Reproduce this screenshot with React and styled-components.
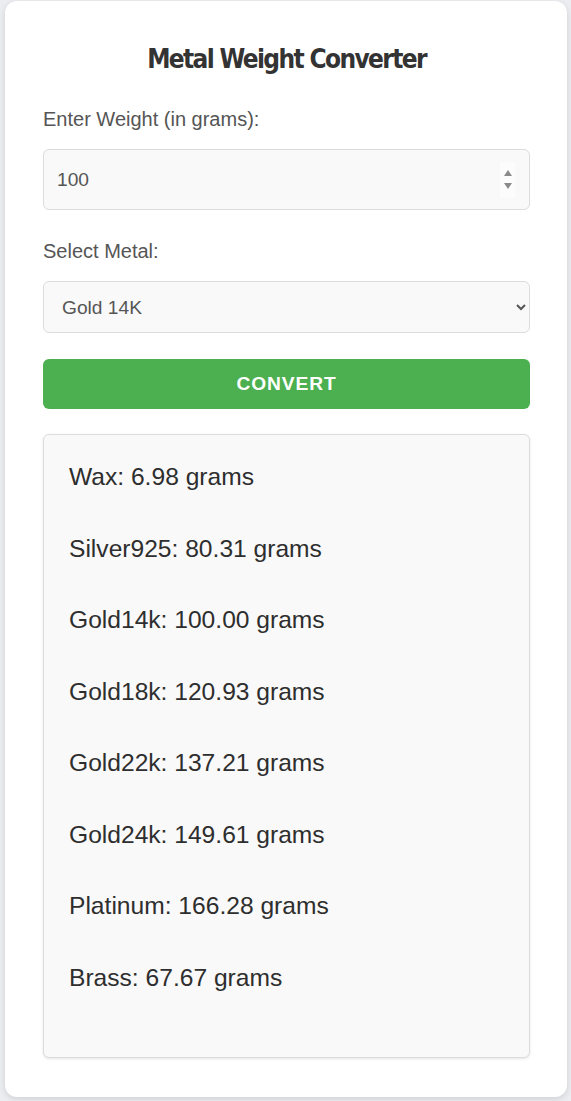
import styled, { createGlobalStyle } from "styled-components";

const GlobalStyle = createGlobalStyle`
  html, body {
    margin: 0;
    padding: 0;
    background: #ecedf1;
  }
  body {
    padding: 1px 4px 4px 5px;
    font-family: "Liberation Sans", Arial, sans-serif;
  }
`;

const Card = styled.div`
  background: #fff;
  border-radius: 12px;
  box-shadow: 0 2px 6px rgba(0, 0, 0, 0.12);
  padding: 42px 37px 39px 38px;
  display: flex;
  flex-direction: column;
`;

const Title = styled.h1`
  margin: 0;
  font-family: "DejaVu Sans Condensed", "DejaVu Sans", sans-serif;
  font-stretch: condensed;
  font-weight: 700;
  font-size: 26px;
  line-height: 32px;
  letter-spacing: -1.65px;
  text-align: center;
  color: #333;
`;

const Label = styled.label`
  display: block;
  font-size: 20px;
  line-height: 22px;
  color: #555;
  margin-top: ${({ $top }) => $top}px;
`;

const Field = styled.div`
  display: flex;
  align-items: center;
  margin-top: 19px;
  height: ${({ $h }) => $h}px;
  box-sizing: border-box;
  border: 1px solid #dcdcdc;
  border-radius: 6px;
  background: #f9f9f9;
  padding: 0 14px 0 13px;
`;

const NumberInput = styled.input`
  flex: 1;
  border: none;
  outline: none;
  background: transparent;
  font-family: "Liberation Sans", Arial, sans-serif;
  font-size: 19.2px;
  color: #555;
  padding: 0;
`;

const Spinner = styled.div`
  width: 15px;
  height: 36px;
  background: #fcfcfc;
  display: flex;
  flex-direction: column;
  align-items: center;
  justify-content: center;
  gap: 7px;
`;

const Select = styled.select`
  margin-top: 19px;
  height: 52px;
  width: 100%;
  box-sizing: border-box;
  border: 1px solid #dcdcdc;
  border-radius: 6px;
  background: #f9f9f9;
  padding: 0 10px 0 14px;
  font-family: "Liberation Sans", Arial, sans-serif;
  font-size: 19.2px;
  color: #555;
`;

const Button = styled.button`
  margin-top: 26px;
  height: 50px;
  border: none;
  border-radius: 6px;
  background: #4caf50;
  color: #fff;
  font-family: "Liberation Sans", Arial, sans-serif;
  font-weight: 700;
  font-size: 19.2px;
  letter-spacing: 0.9px;
`;

const Results = styled.div`
  margin-top: 25px;
  height: 624px;
  box-sizing: border-box;
  background: #f9f9f9;
  border: 1px solid #dcdcdc;
  border-radius: 6px;
  box-shadow: 0 1px 3px rgba(0, 0, 0, 0.1);
  padding: 28px 25px;
  display: flex;
  flex-direction: column;
  gap: 44px;
`;

const ResultLine = styled.p`
  margin: 0;
  font-size: 24.6px;
  line-height: 27.5px;
  color: #2e2e2e;
`;

const Arrow = ({ down }) => (
  <svg width="8" height="6" viewBox="0 0 8 6">
    <path d={down ? "M0 0 L8 0 L4 6 Z" : "M0 6 L8 6 L4 0 Z"} fill="#8a8a8a" />
  </svg>
);

const results = [
  "Wax: 6.98 grams",
  "Silver925: 80.31 grams",
  "Gold14k: 100.00 grams",
  "Gold18k: 120.93 grams",
  "Gold22k: 137.21 grams",
  "Gold24k: 149.61 grams",
  "Platinum: 166.28 grams",
  "Brass: 67.67 grams",
];

export default function App() {
  return (
    <>
      <GlobalStyle />
      <Card>
        <Title>Metal Weight Converter</Title>
        <Label $top={33}>Enter Weight (in grams):</Label>
        <Field $h={61}>
          <NumberInput type="text" defaultValue="100" />
          <Spinner>
            <Arrow />
            <Arrow down />
          </Spinner>
        </Field>
        <Label $top={30}>Select Metal:</Label>
        <Select defaultValue="gold14k">
          <option value="silver925">Silver 925</option>
          <option value="gold14k">Gold 14K</option>
          <option value="gold18k">Gold 18K</option>
          <option value="gold22k">Gold 22K</option>
          <option value="gold24k">Gold 24K</option>
          <option value="platinum">Platinum</option>
          <option value="brass">Brass</option>
        </Select>
        <Button>CONVERT</Button>
        <Results>
          {results.map((r) => (
            <ResultLine key={r}>{r}</ResultLine>
          ))}
        </Results>
      </Card>
    </>
  );
}
